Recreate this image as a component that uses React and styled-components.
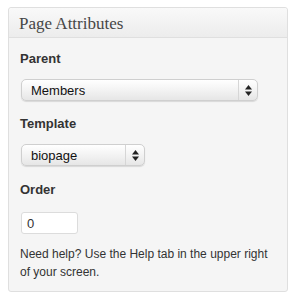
import styled, { createGlobalStyle } from "styled-components";

const GlobalStyle = createGlobalStyle`
    body{
        margin:0;
        background:#fff;
        font-family: "Liberation Sans", Arial, sans-serif;
    }
`

const StyledBox = styled.section`
    margin: 7px 0 0 8px;
    width: 278px;
    height: 283px;
    border: 1px solid #dfdfdf;
    border-radius: 3px;
    background: #f5f5f5;
    box-shadow: inset 0 1px 0 #fff;
    box-sizing: content-box;
`

const StyledHeader = styled.h3`
    margin: 0;
    padding: 2px 10px 0;
    box-sizing: border-box;
    height: 30px;
    display: flex;
    align-items: center;
    font-family: "Liberation Serif", Georgia, serif;
    font-weight: normal;
    font-size: 17px;
    color: #464646;
    background: linear-gradient(#f9f9f9, #ececec);
    border-bottom: 1px solid #dfdfdf;
    border-radius: 3px 3px 0 0;
`

const StyledInside = styled.div`
    padding: 13px 10px 0 11px;
    display: flex;
    flex-direction: column;
    align-items: flex-start;
`

const StyledLabel = styled.p`
    margin: 0;
    font-size: 13px;
    font-weight: bold;
    color: #333;
    line-height: 16px;
`

const StyledSelect = styled.div`
    margin: ${props => props.$top}px 0 ${props => props.$bottom}px 1px;
    width: ${props => props.$width}px;
    height: 22px;
    display: flex;
    border: 1px solid #cfcfcf;
    border-radius: 5px;
    background: linear-gradient(#fff, #f3f3f3 50%, #e6e6e6);
    box-shadow: 0 1px 1px rgba(0,0,0,0.12);
    box-sizing: border-box;
    font-size: 13px;
    color: #111;
`

const StyledValue = styled.span`
    flex: 1;
    display: flex;
    align-items: center;
    padding-left: 9px;
`

const StyledArrow = styled.span`
    width: 18px;
    border-left: 1px solid #d6d6d6;
    display: flex;
    align-items: center;
    justify-content: center;
`

const StyledInput = styled.div`
    margin: 14px 0 11px 1px;
    width: 57px;
    height: 22px;
    border: 1px solid #dcdcdc;
    border-radius: 3px;
    background: #fff;
    box-sizing: border-box;
    display: flex;
    align-items: center;
    padding-left: 5px;
    font-size: 13px;
    color: #333;
`

const StyledHelp = styled.p`
    margin: 0;
    font-size: 12px;
    line-height: 18px;
    color: #333;
`

const Arrows = () => (
    <svg width="7" height="11" viewBox="0 0 7 11">
        <path d="M3.5 0 L7 4.5 L0 4.5 Z" fill="#222" />
        <path d="M3.5 11 L7 6.5 L0 6.5 Z" fill="#222" />
    </svg>
)

const App = () => {
    return(
        <>
            <GlobalStyle />
            <StyledBox>
                <StyledHeader>Page Attributes</StyledHeader>
                <StyledInside>
                    <StyledLabel>Parent</StyledLabel>
                    <StyledSelect $width={237} $top={12} $bottom={15}>
                        <StyledValue>Members</StyledValue>
                        <StyledArrow><Arrows /></StyledArrow>
                    </StyledSelect>
                    <StyledLabel>Template</StyledLabel>
                    <StyledSelect $width={124} $top={12} $bottom={16}>
                        <StyledValue>biopage</StyledValue>
                        <StyledArrow><Arrows /></StyledArrow>
                    </StyledSelect>
                    <StyledLabel>Order</StyledLabel>
                    <StyledInput>0</StyledInput>
                    <StyledHelp>Need help? Use the Help tab in the upper right of your screen.</StyledHelp>
                </StyledInside>
            </StyledBox>
        </>
    )
}

export default App;
